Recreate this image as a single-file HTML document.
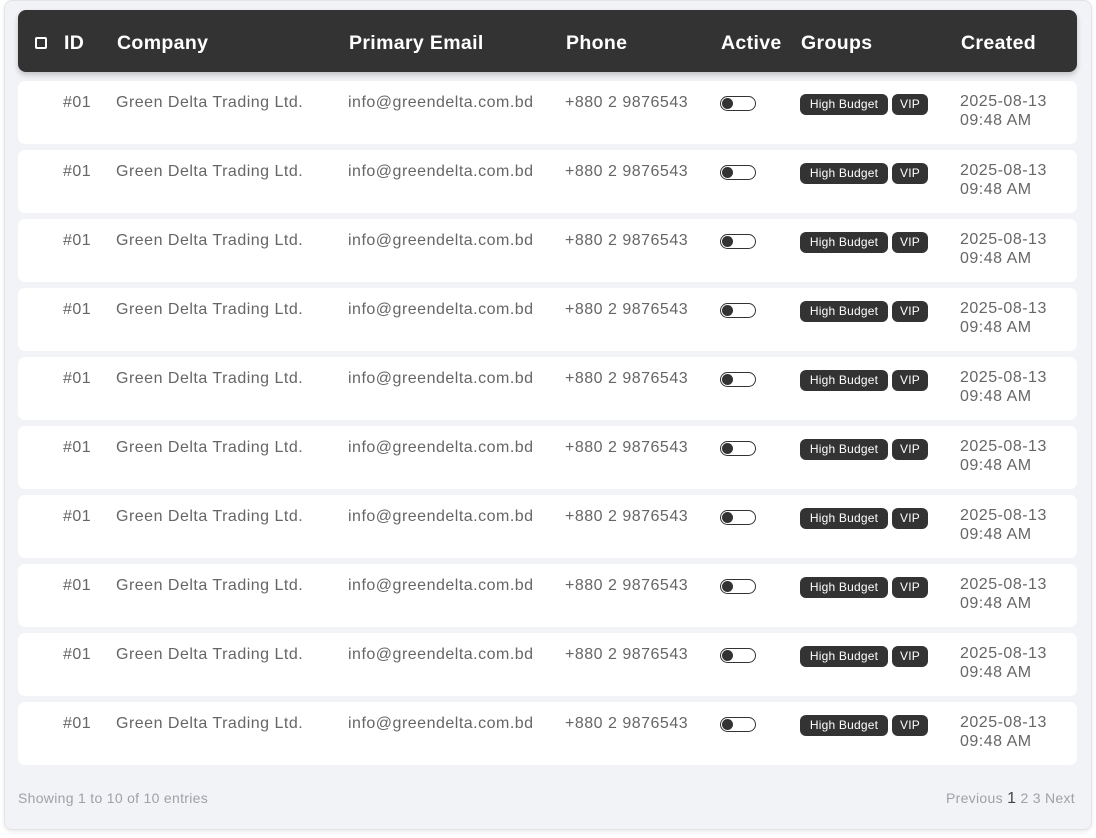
<!DOCTYPE html>
<html><head><style>
body{margin:0;width:1096px;height:838px;background:#fff;font-family:"Liberation Sans",sans-serif;position:relative;overflow:hidden}
.wrap{position:absolute;left:4px;top:0;width:1086px;height:828px;background:#f2f3f7;border:1px solid #e3e4e8;border-radius:8px;box-shadow:0 2px 4px rgba(0,0,0,.08)}
.hd{position:absolute;left:18px;top:10px;width:1059px;height:62px;background:#333;border-radius:8px;box-shadow:0 3px 6px rgba(0,0,0,.2);color:#fff;font-size:19.5px;font-weight:bold;letter-spacing:0.35px}
.hd span{position:absolute;top:22px}
.cb{position:absolute;left:17px;top:27px;width:8px;height:8px;border:2px solid #fff;border-radius:2px}
.row{position:absolute;left:18px;width:1059px;height:63px;background:#fff;border-radius:7px;color:#666;font-size:16px;letter-spacing:0.5px}
.row span{position:absolute;top:13px}
.tg{position:absolute;left:702px;top:15px;width:34px;height:13px;border:1.5px solid #333;border-radius:8px}
.tg:after{content:"";position:absolute;left:1px;top:1px;width:11px;height:11px;border-radius:50%;background:#333}
.b{position:absolute;top:13px;height:21px;line-height:21px;background:#333;color:#fff;font-size:12px;border-radius:6px;text-align:center;letter-spacing:0.2px}
.cr{line-height:19px;top:11px!important}
.ft{position:absolute;top:790px;font-size:14px;color:#a0a0a6;letter-spacing:0.3px}
</style></head><body>
<div class="wrap"></div>
<div class="hd"><div class="cb"></div><span style="left:46px">ID</span><span style="left:99px">Company</span><span style="left:331px">Primary Email</span><span style="left:548px">Phone</span><span style="left:703px">Active</span><span style="left:783px">Groups</span><span style="left:943px">Created</span></div>
<div id="rows"></div>
<div class="ft" style="left:18px">Showing 1 to 10 of 10 entries</div>
<div class="ft" style="right:21px">Previous <span style="color:#444;font-size:16px">1</span> 2 3 Next</div>
<script>
var h='';for(var i=0;i<10;i++){h+='<div class="row" style="top:'+(81+i*69)+'px"><span style="left:45px">#01</span><span style="left:98px">Green Delta Trading Ltd.</span><span style="left:330px">info@greendelta.com.bd</span><span style="left:547px">+880 2 9876543</span><div class="tg"></div><div class="b" style="left:782px;width:88px">High Budget</div><div class="b" style="left:874px;width:36px">VIP</div><span class="cr" style="left:942px">2025-08-13<br>09:48 AM</span></div>'}
document.getElementById('rows').innerHTML=h;
</script>
</body></html>
